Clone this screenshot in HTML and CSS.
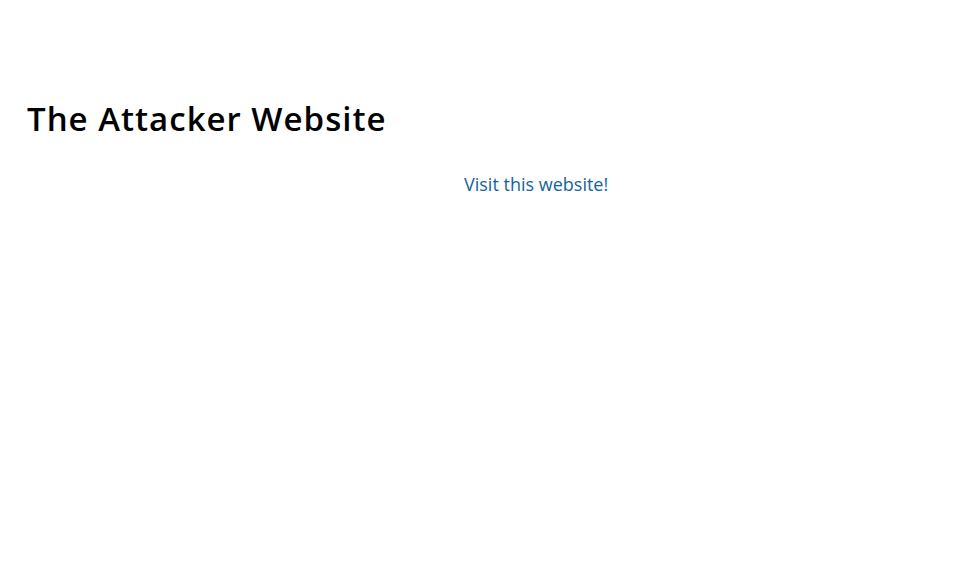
FILE: index.html
```html
<!DOCTYPE html>
<html>
<head>
<meta charset="utf-8">
<link rel="stylesheet" href="styles.css">
<title>The Attacker Website</title>
</head>
<body>
<div class="page">
  <h1 class="title">The Attacker Website</h1>
  <div class="link-row">
    <a class="visit" href="#">Visit this website!</a>
  </div>
</div>
</body>
</html>
```
FILE: styles.css
```css
html, body {
  margin: 0;
  padding: 0;
  background: #ffffff;
}
.page {
  padding: 96px 0 0 27px;
  font-family: "Open Sans", "Noto Sans", sans-serif;
}
.title {
  margin: 0;
  font-size: 33px;
  font-weight: 600;
  color: #000000;
  line-height: 46px;
  letter-spacing: 1px;
}
.link-row {
  padding: 30px 0 0 437px;
}
.visit {
  font-size: 18px;
  color: #13649a;
  text-decoration: none;
  line-height: 24px;
}
```
